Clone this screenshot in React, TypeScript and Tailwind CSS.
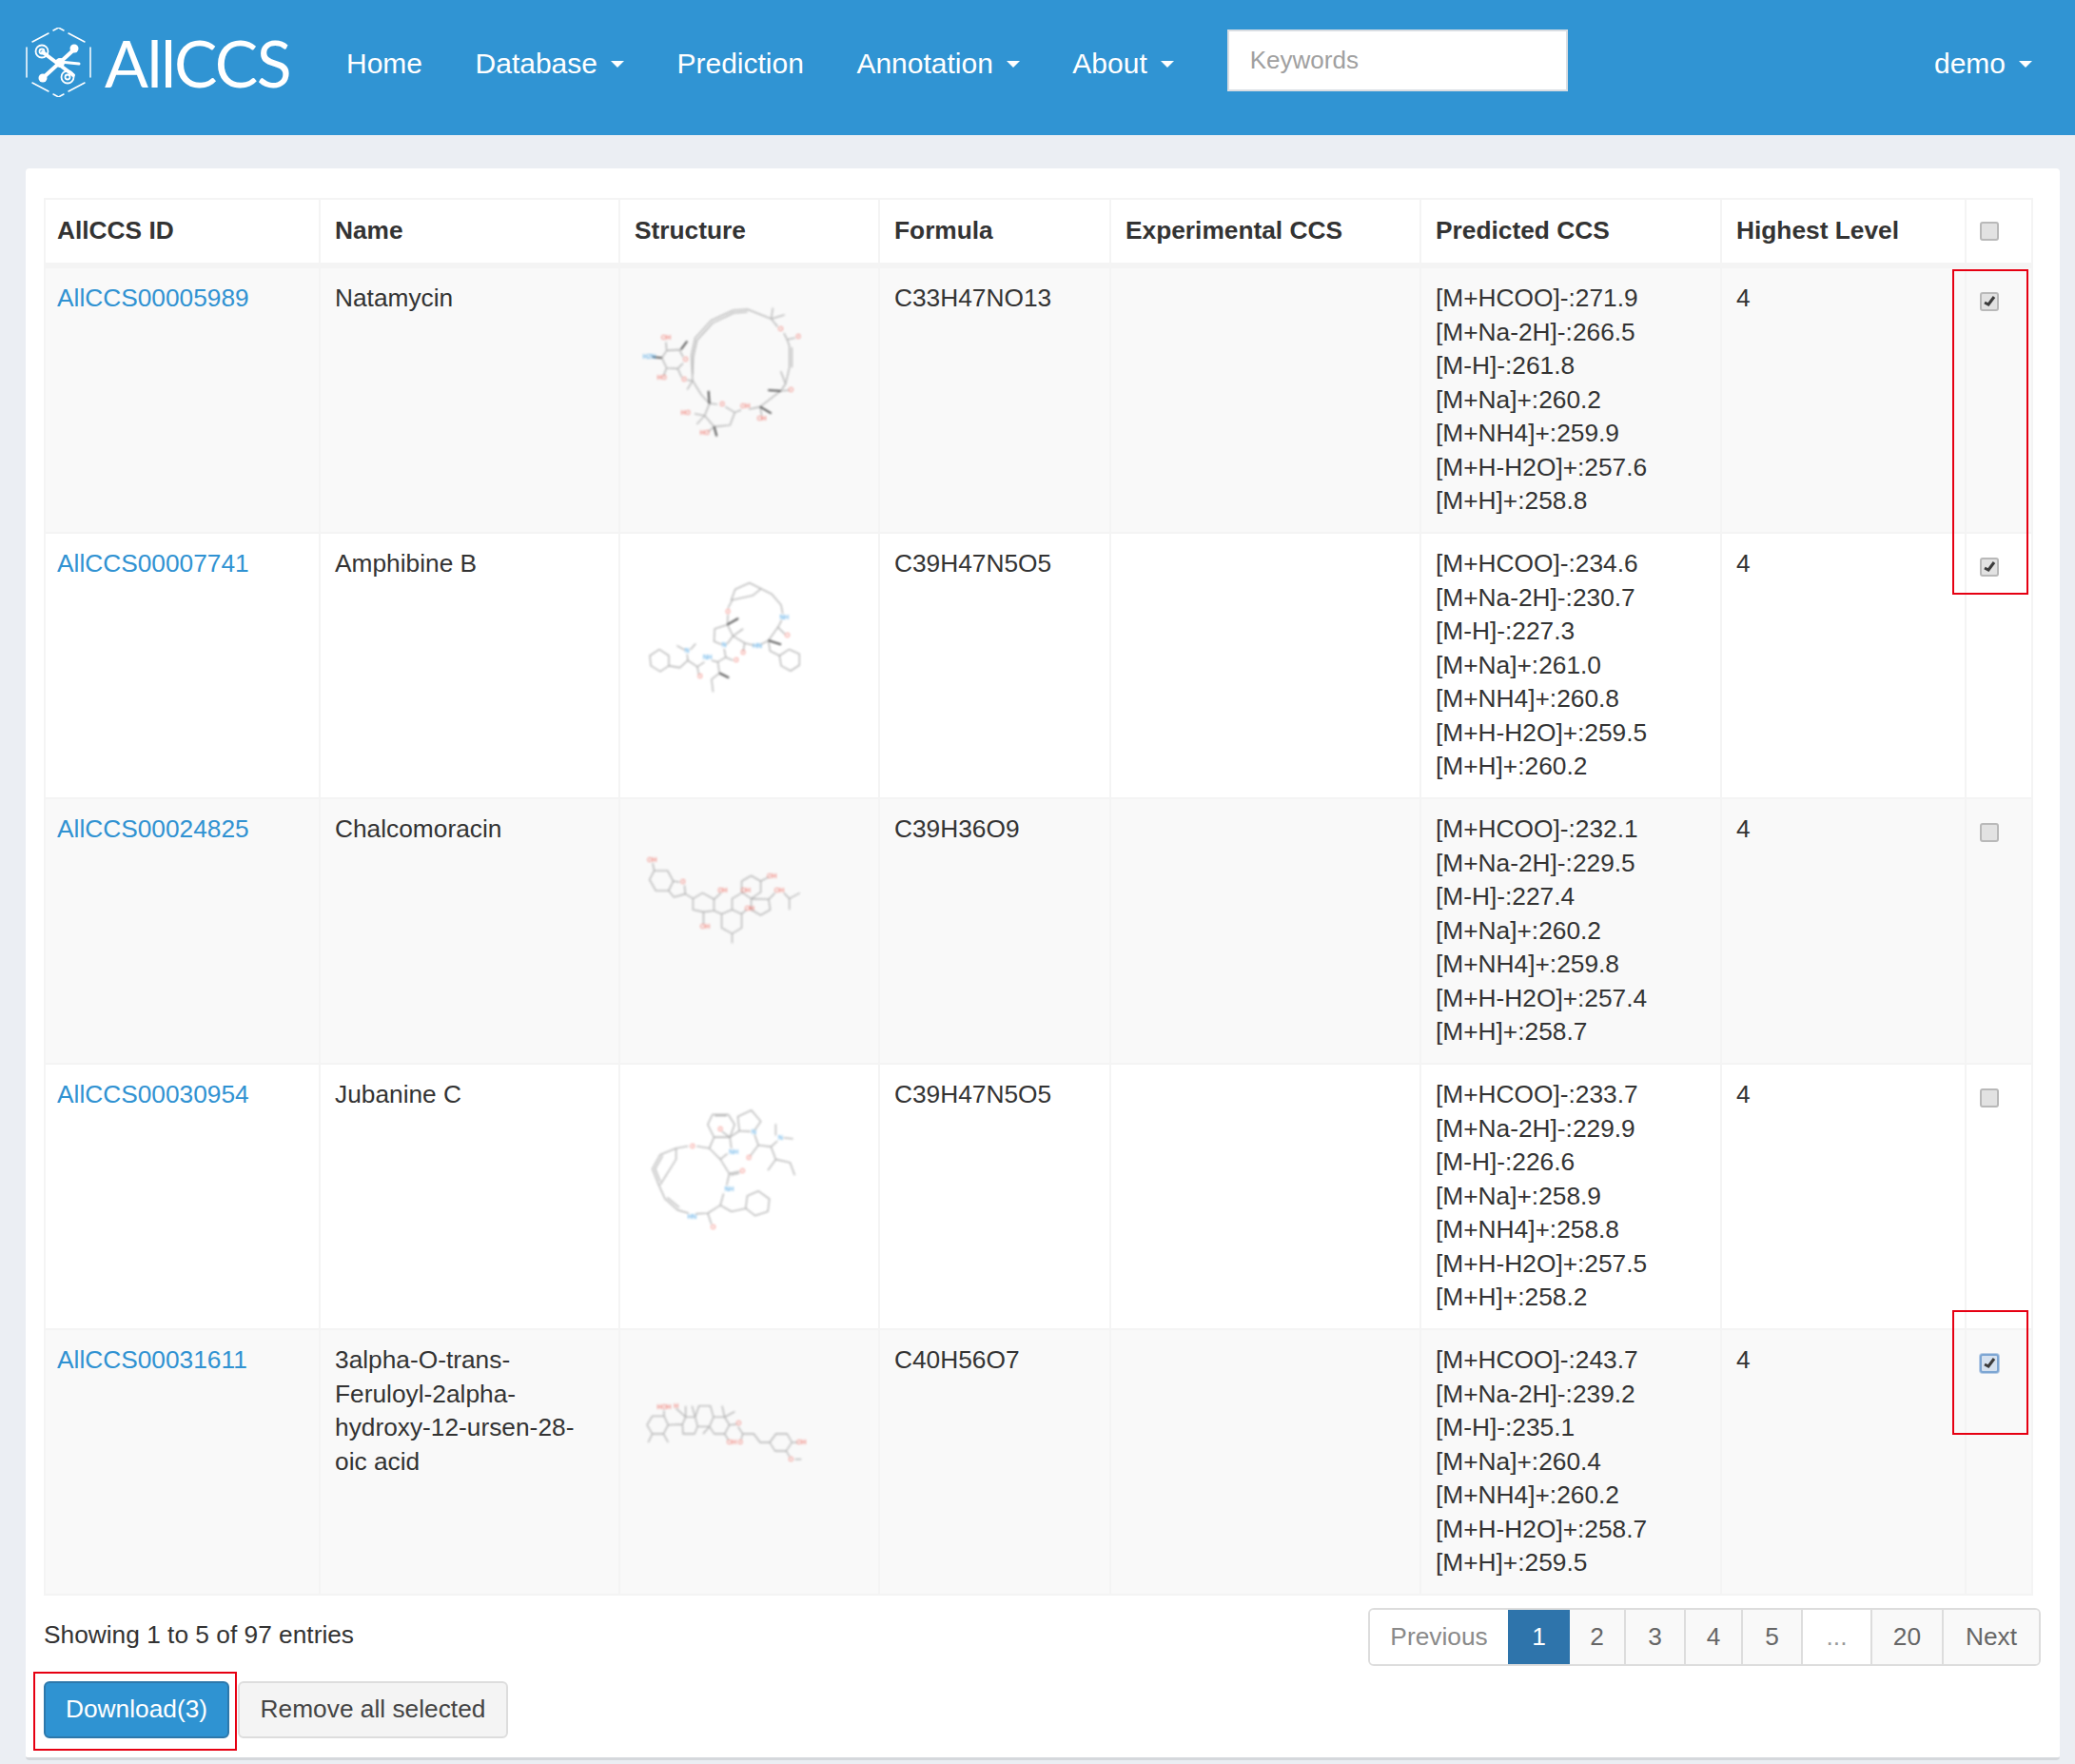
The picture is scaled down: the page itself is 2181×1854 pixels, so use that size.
import React from "react";

type MolData = {
  vb: string;
  cls: string;
  lines: string[];
  dark?: string[];
  labels: [number, number, string, "r" | "b"][];
};

const mols: MolData[] = [
  {
    vb: "100 120 510 425",
    cls: "ml-[22px] mt-[38px] w-[170px] h-[142px]",
    lines: [
      "262,360 258,280 270,225 320,170 390,138 435,135 510,165 530,190",
      "262,340 264,285 276,232 325,178 392,146 435,143",
      "550,210 560,230 567,250 567,320 555,370 540,392 475,442 440,450",
      "575,255 575,318",
      "560,230 585,225",
      "415,452 395,460 380,500 330,505 300,470 315,432 340,434",
      "365,442 395,460",
      "315,432 290,405 262,360 245,388",
      "180,265 220,262 232,285",
      "232,305 215,322 180,320 165,288 180,265",
      "215,322 228,350",
      "245,358 262,360",
      "180,265 178,238",
      "180,320 170,345",
      "510,165 515,130",
      "510,165 552,152",
      "555,370 540,330",
      "540,392 565,390",
      "475,442 480,470",
      "300,470 268,464",
      "300,470 275,497",
      "330,505 312,520",
    ],
    dark: ["165,288 135,285", "225,262 245,235", "540,392 500,390", "475,442 510,463", "330,505 338,535", "315,432 312,392"],
    labels: [
      [178, 232, "OH", "r"],
      [125, 290, "H2N", "b"],
      [165, 356, "HO", "r"],
      [240, 300, "O", "r"],
      [235, 362, "O", "r"],
      [355, 440, "O", "r"],
      [428, 446, "OH", "r"],
      [240, 468, "HO", "r"],
      [300, 530, "HO", "r"],
      [480, 486, "OH", "r"],
      [572, 395, "O", "r"],
      [540, 205, "O", "r"],
      [595, 228, "O", "r"],
    ],
  },
  {
    vb: "90 95 485 355",
    cls: "ml-[29px] mt-[50px] w-[162px] h-[118px]",
    lines: [
      "125,310 155,330 155,362 128,380 98,362 95,330 125,310",
      "155,362 190,368 215,345 245,365 268,350",
      "245,365 250,390",
      "215,345 213,325",
      "205,312 180,298",
      "222,312 240,292",
      "290,345 310,350 335,335 358,345",
      "335,335 330,308",
      "322,295 298,285 300,245 340,232 358,268 338,295",
      "310,350 315,385 290,405 295,445",
      "340,232 342,200",
      "342,180 355,155",
      "358,268 390,245",
      "358,268 395,290 390,315",
      "395,290 425,298",
      "445,295 470,282 500,240 522,262",
      "500,240 512,218",
      "515,198 510,170 480,135 440,115 410,100 365,120 352,155 420,140 445,120",
      "470,282 475,315 505,330",
      "535,310 568,325 568,360 540,378 510,362 505,330 535,310",
    ],
    dark: ["315,385 345,400", "340,232 375,212", "470,282 510,295"],
    labels: [
      [254, 402, "O", "r"],
      [213, 322, "N", "b"],
      [278, 342, "NH", "b"],
      [368, 352, "O", "r"],
      [330, 304, "N", "b"],
      [342, 196, "O", "r"],
      [390, 328, "O", "r"],
      [435, 306, "HN", "b"],
      [530, 272, "O", "r"],
      [520, 215, "NH", "b"],
    ],
  },
  {
    vb: "90 100 485 275",
    cls: "ml-[29px] mt-[61px] w-[162px] h-[92px]",
    lines: [
      "105,118 110,142 152,142 170,175 155,205 115,205 95,170 110,142",
      "170,175 190,178",
      "205,188 208,215 172,225 155,205",
      "208,215 232,230 262,212 298,232 298,268 265,272 232,265 232,230",
      "265,272 265,310",
      "298,232 320,212",
      "298,268 322,278 355,265 385,278 385,322 355,340 322,322 322,278",
      "355,340 355,370",
      "355,265 355,230 385,212",
      "385,175 415,158 445,175 445,210 415,230 385,210 385,175",
      "445,175 470,162",
      "415,230 470,232 475,265 445,282 415,265 415,230",
      "470,232 490,212",
      "518,212 535,230 568,212",
      "535,230 535,265",
      "385,278 400,265",
    ],
    labels: [
      [103, 114, "OH", "r"],
      [200, 184, "O", "r"],
      [325, 212, "OH", "r"],
      [398, 212, "OH", "r"],
      [480, 166, "OH", "r"],
      [503, 212, "OH", "r"],
      [410, 266, "OH", "r"],
      [270, 324, "OH", "r"],
    ],
  },
  {
    vb: "70 80 460 380",
    cls: "ml-[32px] mt-[46px] w-[153px] h-[127px]",
    lines: [
      "150,205 188,198",
      "215,198 255,205 290,240 318,285 310,322",
      "300,348 290,385 250,410 212,412",
      "190,410 155,400 115,365 95,320 75,270 100,225 150,205 150,240 100,320",
      "108,228 84,270 100,310",
      "122,360 160,392",
      "255,205 270,170 250,130 265,98 315,98 335,130 320,170 270,170",
      "272,102 310,102",
      "290,240 312,222",
      "325,205 320,170 295,152",
      "320,170 350,150 345,105 388,85 418,120 398,148",
      "350,150 385,152",
      "398,162 410,195 385,228",
      "410,195 450,200 470,182",
      "465,165 465,128",
      "490,172 520,175",
      "450,200 465,240 440,275",
      "465,240 510,250 525,290",
      "318,285 350,278",
      "322,290 350,284",
      "290,385 325,405 370,395 400,418 440,405 445,365 410,340 375,355 370,395",
      "250,410 262,445",
    ],
    labels: [
      [202, 204, "O", "r"],
      [332, 222, "NH", "b"],
      [290, 152, "O", "r"],
      [396, 160, "N", "b"],
      [380, 242, "O", "r"],
      [480, 178, "N", "b"],
      [360, 284, "O", "r"],
      [318, 342, "NH", "b"],
      [200, 428, "HN", "b"],
      [267, 460, "O", "r"],
    ],
  },
  {
    vb: "55 76 510 189",
    cls: "ml-[27px] mt-[75px] w-[170px] h-[63px]",
    lines: [
      "58,150 75,122 112,122 125,150 110,178 75,178 58,150",
      "75,178 62,205",
      "110,178 125,205",
      "112,122 112,104",
      "125,150 170,148 180,125 210,125 218,155 208,178 172,178 170,148",
      "180,125 180,90",
      "180,125 150,98",
      "210,125 222,90 258,90 268,125 255,155 218,155",
      "210,125 200,90",
      "268,125 303,125 318,150 303,178 270,178 255,155",
      "255,155 235,178",
      "303,125 295,90",
      "303,125 335,108",
      "318,150 340,148",
      "303,178 315,198",
      "345,155 360,178 395,178 415,205 445,205 465,178 500,178 515,205 497,232 462,232 445,205",
      "360,178 355,195",
      "515,205 532,205",
      "497,232 508,250",
      "525,258 545,258",
    ],
    labels: [
      [112, 100, "HOH", "r"],
      [150, 96, "H", "r"],
      [347, 152, "O", "r"],
      [325, 210, "OH", "r"],
      [352, 210, "O", "r"],
      [545, 210, "OH", "r"],
      [512, 264, "O", "r"],
    ],
  },
];

function Molecule({ m }: { m: MolData }) {
  return (
    <svg viewBox={m.vb} className={`block overflow-visible blur-[0.8px] ${m.cls}`} fill="none">
      {m.lines.map((p, i) => (
        <polyline key={i} points={p} stroke="#b4b4b4" strokeWidth="4" strokeLinejoin="round" />
      ))}
      {(m.dark ?? []).map((p, i) => (
        <polyline key={i} points={p} stroke="#4a4a4a" strokeWidth="5.5" />
      ))}
      {m.labels.map(([x, y, t, c], i) => (
        <text
          key={i}
          x={x}
          y={y}
          textAnchor="middle"
          fontSize="20"
          fontFamily="Liberation Sans"
          fill={c === "r" ? "#ee5a4e" : "#3a9be0"}
        >
          {t}
        </text>
      ))}
    </svg>
  );
}

function Logo() {
  return (
    <svg viewBox="0 0 69 73" className="w-[69px] h-[73px] shrink-0" fill="none" stroke="#fff" strokeLinecap="round">
      <g strokeWidth="1.5">
        <path d="M29 3 L34.5 0 L40 3" />
        <path d="M45 6 L62 15" />
        <path d="M68 21 V52" />
        <path d="M62 58 L45 67" />
        <path d="M40 70 L34.5 73 L29 70" />
        <path d="M24 67 L7 58" />
        <path d="M1 52 V21" />
        <path d="M7 15 L24 6" />
      </g>
      <g strokeWidth="4">
        <path d="M18 26 L50 50" />
        <path d="M52 22 L18 53" />
        <path d="M36 36 L56 38" strokeWidth="3" />
      </g>
      <g fill="#fff" stroke="none">
        <circle cx="51" cy="22" r="4.5" />
        <circle cx="18" cy="53" r="4.5" />
        <circle cx="36" cy="37" r="5" />
      </g>
      <g strokeWidth="1.8">
        <circle cx="17" cy="25" r="6.5" />
        <circle cx="17" cy="25" r="2.5" />
        <circle cx="44" cy="52" r="6.5" />
        <circle cx="44" cy="52" r="2.5" />
      </g>
    </svg>
  );
}

function Caret({ className = "" }: { className?: string }) {
  return <span className={`inline-block border-x-[7px] border-x-transparent border-t-[7px] border-t-white ${className}`} />;
}

function Checkbox({ checked = false, focus = false }: { checked?: boolean; focus?: boolean }) {
  return (
    <span
      className={
        focus
          ? "flex h-[20px] w-[20px] items-center justify-center rounded-[3px] border-2 border-[#7da6d3] bg-[#d6e2f0] shadow-[0_0_0_1px_#b8cde6]"
          : "flex h-[20px] w-[20px] items-center justify-center rounded-[3px] border-2 border-[#b9b9b9] bg-[#e2e2e2]"
      }
    >
      {checked && (
        <svg viewBox="0 0 16 16" className="h-[16px] w-[16px]" fill="none" stroke="#3c3c3c" strokeWidth="3">
          <path d="M3 9 L7 11 L13 3" />
        </svg>
      )}
    </span>
  );
}

const rows = [
  { id: "AllCCS00005989", name: "Natamycin", formula: "C33H47NO13", ccs: ["271.9", "266.5", "261.8", "260.2", "259.9", "257.6", "258.8"], checked: true },
  { id: "AllCCS00007741", name: "Amphibine B", formula: "C39H47N5O5", ccs: ["234.6", "230.7", "227.3", "261.0", "260.8", "259.5", "260.2"], checked: true },
  { id: "AllCCS00024825", name: "Chalcomoracin", formula: "C39H36O9", ccs: ["232.1", "229.5", "227.4", "260.2", "259.8", "257.4", "258.7"], checked: false },
  { id: "AllCCS00030954", name: "Jubanine C", formula: "C39H47N5O5", ccs: ["233.7", "229.9", "226.6", "258.9", "258.8", "257.5", "258.2"], checked: false },
  { id: "AllCCS00031611", name: "3alpha-O-trans-Feruloyl-2alpha-hydroxy-12-ursen-28-oic acid", formula: "C40H56O7", ccs: ["243.7", "239.2", "235.1", "260.4", "260.2", "258.7", "259.5"], checked: true, focus: true },
];

const adducts = ["[M+HCOO]-:", "[M+Na-2H]-:", "[M-H]-:", "[M+Na]+:", "[M+NH4]+:", "[M+H-H2O]+:", "[M+H]+:"];

const headers = ["Name", "Structure", "Formula", "Experimental CCS", "Predicted CCS", "Highest Level"];

const td = "border-2 border-[#f4f4f4] px-[15px] pt-[14px] pb-[14.5px] align-top";

export default function App() {
  return (
    <div className="relative min-h-[1854px] bg-[#ebeef3] font-['Liberation_Sans',Arial,sans-serif] text-[26.3px] leading-[35.5px] text-[#333]">
      <header className="flex h-[142px] items-start bg-[#3094d3] pr-[45px] pl-[27px] text-[30px] text-white">
        <div className="mt-[29px] flex w-[279px] shrink-0 items-center">
          <Logo />
          <span className="ml-[14px] font-['Lato',sans-serif] text-[68px] leading-[73px] font-normal tracking-[-1.5px]">AllCCS</span>
        </div>
        <nav className="mt-[49px] ml-[58px] flex items-center gap-[55.5px] leading-[36px]">
          <span>Home</span>
          <span className="flex items-center gap-[14px]">Database<Caret /></span>
          <span>Prediction</span>
          <span className="flex items-center gap-[14px]">Annotation<Caret /></span>
          <span className="flex items-center gap-[14px]">About<Caret /></span>
        </nav>
        <div className="mt-[31px] ml-[56px] flex h-[65px] w-[358px] items-center border-2 border-[#d9dde2] bg-white pl-[22px] text-[26px] text-[#a0a0a0]">
          Keywords
        </div>
        <div className="mt-[49px] ml-auto flex items-center gap-[14px] leading-[36px]">demo<Caret /></div>
      </header>

      <main className="mt-[35px] mr-[16px] ml-[27px] rounded-[4px] border-b-[3px] border-[#d5d8dc] bg-white pt-[31px] pr-[20px] pb-[20px] pl-[19px]">
        <table className="w-[2089px] table-fixed border-collapse">
          <colgroup>
            <col className="w-[289px]" />
            <col className="w-[315px]" />
            <col className="w-[273px]" />
            <col className="w-[243px]" />
            <col className="w-[326px]" />
            <col className="w-[316px]" />
            <col className="w-[257px]" />
            <col className="w-[70px]" />
          </colgroup>
          <thead>
            <tr className="h-[70px]">
              <th className="border-2 border-b-[6px] border-[#f4f4f4] pr-[15px] pl-[12px] text-left align-middle font-bold">AllCCS ID</th>
              {headers.map((h) => (
                <th key={h} className="border-2 border-b-[6px] border-[#f4f4f4] px-[15px] text-left align-middle font-bold">
                  {h}
                </th>
              ))}
              <th className="border-2 border-b-[6px] border-[#f4f4f4] pl-[14px] align-middle">
                <Checkbox />
              </th>
            </tr>
          </thead>
          <tbody>
            {rows.map((r, i) => (
              <tr key={r.id} className={i % 2 === 0 ? "bg-[#f9f9f9]" : "bg-white"}>
                <td className="border-2 border-[#f4f4f4] pt-[14px] pr-[15px] pb-[14.5px] pl-[12px] align-top"><span className="text-[#3092d2]">{r.id}</span></td>
                <td className="border-2 border-[#f4f4f4] pt-[14px] pr-[40px] pb-[14.5px] pl-[15px] align-top">{r.name}</td>
                <td className="border-2 border-[#f4f4f4] align-top"><Molecule m={mols[i]} /></td>
                <td className={td}>{r.formula}</td>
                <td className={td}></td>
                <td className={td}>
                  {adducts.map((a, j) => (
                    <div key={a}>{a}{r.ccs[j]}</div>
                  ))}
                </td>
                <td className={td}>4</td>
                <td className="border-2 border-[#f4f4f4] pt-[25px] pl-[14px] align-top">
                  <Checkbox checked={r.checked} focus={r.focus} />
                </td>
              </tr>
            ))}
          </tbody>
        </table>

        <div className="mt-[13px] flex items-start justify-between">
          <span className="mt-[11px]">Showing 1 to 5 of 97 entries</span>
          <div className="flex h-[61px] overflow-hidden rounded-[6px] border-2 border-[#ddd] text-[#666]">
            <span className="flex w-[145px] items-center justify-center bg-white text-[#8a8a8a]">Previous</span>
            <span className="flex w-[65px] items-center justify-center bg-[#2e74ab] font-medium text-white">1</span>
            {[["2", "w-[59px]"], ["3", "w-[63px]"], ["4", "w-[60px]"], ["5", "w-[63px]"]].map(([n, w]) => (
              <span key={n} className={`flex ${w} items-center justify-center border-r-2 border-[#ddd] bg-[#f9f9f9]`}>{n}</span>
            ))}
            <span className="flex w-[73px] items-center justify-center border-r-2 border-[#ddd] bg-white text-[#999]">...</span>
            <span className="flex w-[75px] items-center justify-center border-r-2 border-[#ddd] bg-[#f9f9f9]">20</span>
            <span className="flex w-[100px] items-center justify-center bg-[#f9f9f9]">Next</span>
          </div>
        </div>

        <div className="mt-[16px] flex gap-[9px]">
          <button className="flex h-[60px] w-[195px] items-center justify-center rounded-[6px] border-2 border-[#2d78ab] bg-[#2f93d2] text-white">Download(3)</button>
          <button className="flex h-[60px] w-[284px] items-center justify-center rounded-[6px] border-2 border-[#ddd] bg-[#f4f4f4] text-[#444]">Remove all selected</button>
        </div>
      </main>

      <div className="absolute top-[283px] left-[2052px] h-[342px] w-[80px] border-2 border-[#e60012]" />
      <div className="absolute top-[1377px] left-[2052px] h-[131px] w-[80px] border-2 border-[#e60012]" />
      <div className="absolute top-[1757px] left-[35px] h-[83px] w-[214px] border-2 border-[#e60012]" />
    </div>
  );
}
